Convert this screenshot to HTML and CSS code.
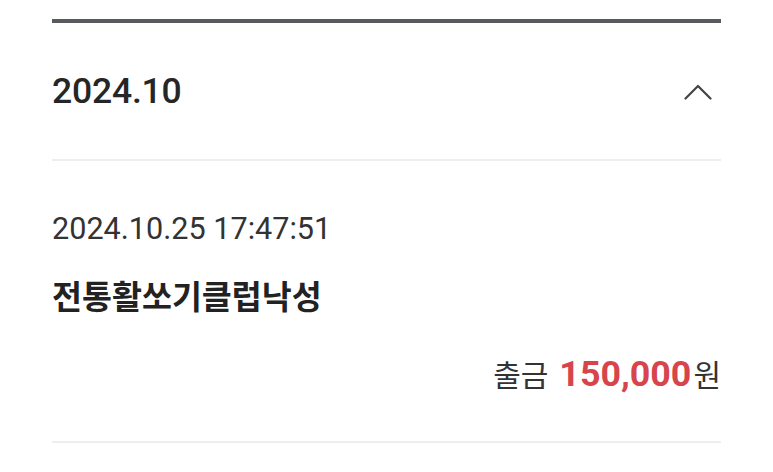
FILE: index.html
```html
<!DOCTYPE html>
<html lang="ko">
<head>
<meta charset="utf-8">
<link rel="stylesheet" href="styles.css">
</head>
<body>
<div class="wrap">
  <section class="month">
    <div class="month-head">
      <h2 class="month-title">2024.10</h2>
      <svg class="chevron" width="28" height="17" viewBox="0 0 28 17" aria-hidden="true">
        <polyline points="1.5,15.5 14,3 26.5,15.5" fill="none" stroke="#444" stroke-width="2.2" stroke-linecap="round" stroke-linejoin="round"/>
      </svg>
    </div>
    <div class="item">
      <div class="item-date">2024.10.25 17:47:51</div>
      <div class="item-title">전통활쏘기클럽낙성</div>
      <div class="item-amount">
        <span class="amount-label">출금</span>
        <span class="amount-value">150,000</span>
        <span class="amount-unit">원</span>
      </div>
    </div>
  </section>
</div>
</body>
</html>
```

FILE: styles.css
```css
html, body {
  margin: 0;
  padding: 0;
  background: #ffffff;
}

body {
  font-family: Roboto, "Noto Sans CJK KR", sans-serif;
  color: #222;
}

.wrap {
  padding: 19px 52px 0;
}

.month {
  border-top: 4px solid #575b60;
}

.month-head {
  display: flex;
  align-items: center;
  justify-content: space-between;
  height: 136px;
  border-bottom: 2px solid #eeeeee;
  padding-right: 9px;
}

.month-title {
  margin: 0;
  font-family: Roboto, sans-serif;
  font-weight: 500;
  font-size: 35.5px;
  line-height: 40px;
  color: #262626;
  letter-spacing: -0.2px;
}

.chevron {
  display: block;
}

.item {
  padding-top: 51px;
  border-bottom: 2px solid #eeeeee;
  padding-bottom: 45px;
}

.item-date {
  font-family: Roboto, sans-serif;
  font-size: 30.6px;
  line-height: 34px;
  color: #333;
}

.item-title {
  margin-top: 30px;
  font-family: "Noto Sans CJK KR", sans-serif;
  font-weight: 700;
  font-size: 32.6px;
  line-height: 38px;
  color: #222;
}

.item-amount {
  margin-top: 37px;
  display: flex;
  justify-content: flex-end;
  align-items: baseline;
  line-height: 44px;
}

.amount-label {
  font-family: "Noto Sans CJK KR", sans-serif;
  font-size: 30px;
  color: #333;
  margin-right: 11px;
}

.amount-value {
  font-family: Roboto, sans-serif;
  font-weight: 700;
  font-size: 35.8px;
  color: #d8444b;
  margin-right: 2px;
}

.amount-unit {
  font-family: "Noto Sans CJK KR", sans-serif;
  font-size: 30px;
  color: #333;
}
```
